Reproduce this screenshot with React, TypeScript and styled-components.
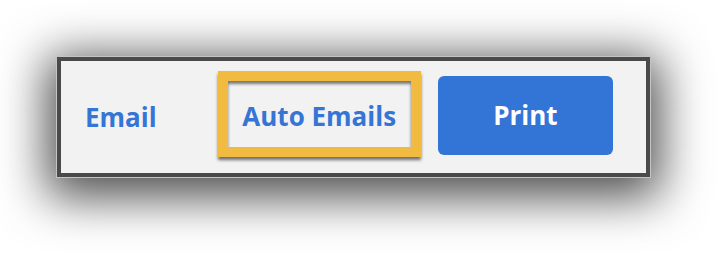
import React from "react";
import styled, { createGlobalStyle } from "styled-components";

const GlobalStyle = createGlobalStyle`
  html, body {
    margin: 0;
    padding: 0;
    background: #ffffff;
    font-family: "Open Sans", "Liberation Sans", sans-serif;
  }
`;

const Page = styled.div`
  width: 728px;
  height: 256px;
  padding: 57px 0 0 57px;
  box-sizing: border-box;
`;

const Panel = styled.div`
  box-sizing: border-box;
  width: 593px;
  height: 120px;
  display: flex;
  align-items: center;
  padding: 0 33px 0 24px;
  background: #f2f2f2;
  border: 4px solid #4a4a4a;
  box-shadow: 0 0 0 1px #c4c4c4, 0 10px 48px 10px rgba(0, 0, 0, 0.7);
`;

interface LinkProps {
  highlighted?: boolean;
}

const NavLink = styled.a<LinkProps>`
  display: flex;
  align-items: center;
  justify-content: center;
  box-sizing: border-box;
  font-size: 26px;
  font-weight: 700;
  color: #3575d6;
  text-decoration: none;
  white-space: nowrap;
  cursor: pointer;
  ${(props) =>
    props.highlighted
      ? `
    width: 204px;
    height: 86px;
    margin: -6px 0 0 61px;
    border: 10px solid #f0bb40;
    box-shadow: 0 3px 3px rgba(0, 0, 0, 0.55), inset 0 3px 3px rgba(0, 0, 0, 0.5);
    padding-top: 4px;
  `
      : ""}
`;

const PrintButton = styled.button`
  width: 176px;
  height: 79px;
  margin: -4px 0 0 17px;
  border: none;
  border-radius: 6px;
  background: #3375d6;
  color: #ffffff;
  font-family: "Open Sans", "Liberation Sans", sans-serif;
  font-size: 26px;
  font-weight: 700;
  cursor: pointer;
`;

export default function App() {
  return (
    <>
      <GlobalStyle />
      <Page>
        <Panel>
          <NavLink>Email</NavLink>
          <NavLink highlighted>Auto Emails</NavLink>
          <PrintButton>Print</PrintButton>
        </Panel>
      </Page>
    </>
  );
}
